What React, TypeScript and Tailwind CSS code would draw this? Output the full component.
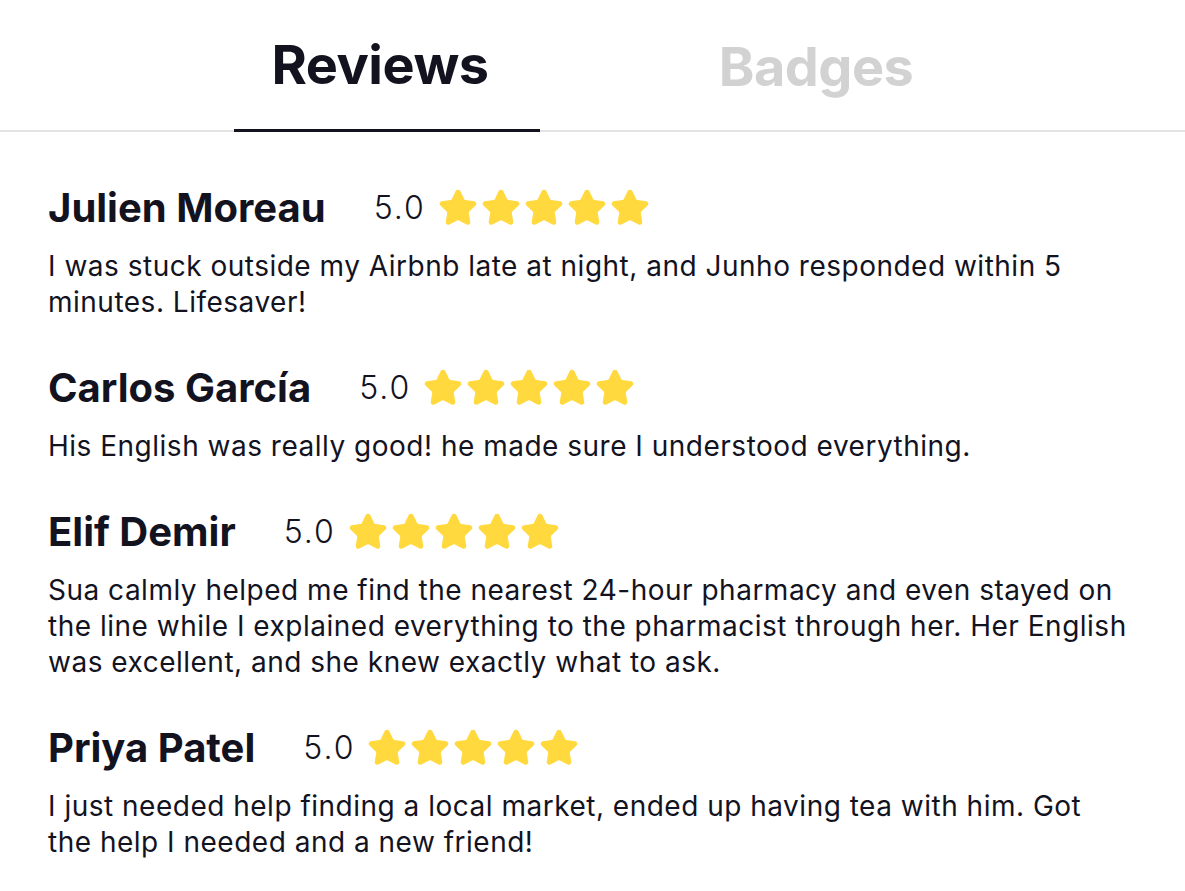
import { Star } from 'lucide-react';

const reviews = [
  {
    name: 'Julien Moreau',
    rating: '5.0',
    text: 'I was stuck outside my Airbnb late at night, and Junho responded within 5 minutes. Lifesaver!',
  },
  {
    name: 'Carlos García',
    rating: '5.0',
    text: 'His English was really good! he made sure I understood everything.',
  },
  {
    name: 'Elif Demir',
    rating: '5.0',
    text: 'Sua calmly helped me find the nearest 24-hour pharmacy and even stayed on the line while I explained everything to the pharmacist through her. Her English was excellent, and she knew exactly what to ask.',
  },
  {
    name: 'Priya Patel',
    rating: '5.0',
    text: 'I just needed help finding a local market, ended up having tea with him. Got the help I needed and a new friend!',
  },
];

function Stars() {
  return (
    <div className="flex gap-[3px]">
      {[0, 1, 2, 3, 4].map((i) => (
        <Star key={i} size={40} fill="#FFD93D" color="#FFD93D" strokeWidth={2} />
      ))}
    </div>
  );
}

export default function App() {
  return (
    <div className="min-h-screen bg-white text-[#13131f] font-['Inter',sans-serif]">
      {/* Tabs */}
      <div className="flex border-b-2 border-[#e3e3e3]">
        <button className="ml-[234px] w-[306px] h-[132px] -mb-[2px] border-b-[3px] border-[#13131f] flex items-center justify-center pr-[14px]">
          <span className="text-[54px] font-bold tracking-[-0.5px]">Reviews</span>
        </button>
        <button className="ml-[123px] w-[306px] h-[132px] -mb-[2px] flex items-center justify-center">
          <span className="text-[54px] font-bold tracking-[-0.5px] text-[#d2d2d2]">Badges</span>
        </button>
      </div>

      {/* Reviews list */}
      <div className="px-12 pt-[52px] flex flex-col gap-[44px]">
        {reviews.map((r) => (
          <div key={r.name} className="flex flex-col gap-[16px]">
            <div className="flex items-center h-[48px]">
              <span className="text-[40px] font-bold tracking-[0px]">{r.name}</span>
              <span className="ml-[48px] text-[32px] font-light tracking-[2px]">{r.rating}</span>
              <div className="ml-[12px]">
                <Stars />
              </div>
            </div>
            <p className="text-[28px] leading-[36px] tracking-[0.5px] pr-[6px]">{r.text}</p>
          </div>
        ))}
      </div>
    </div>
  );
}
